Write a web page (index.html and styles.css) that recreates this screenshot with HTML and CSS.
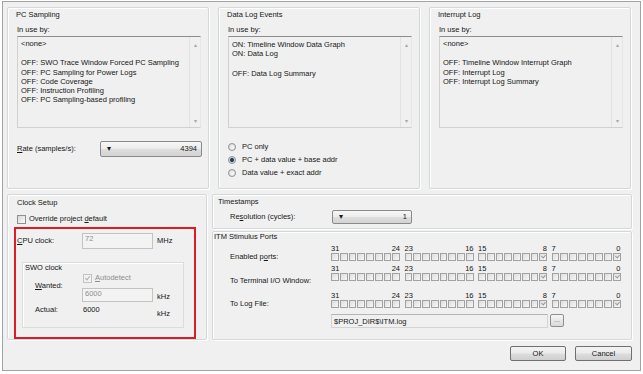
FILE: index.html
```html
<!DOCTYPE html>
<html>
<head>
    <meta charset="utf-8">
    <title>Trace Settings</title>
    <link rel="stylesheet" href="styles.css">
</head>
<body>
    <div class="dialog">
        <div class="top-row">
            <div class="group">
                <div class="group-title">PC Sampling</div>
                <div class="caption">In use by:</div>
                <div class="listbox">
                    <div class="list-items">
                        <div>&lt;none&gt;</div>
                        <div class="blank"></div>
                        <div>OFF: SWO Trace Window Forced PC Sampling</div>
                        <div>OFF: PC Sampling for Power Logs</div>
                        <div>OFF: Code Coverage</div>
                        <div>OFF: Instruction Profiling</div>
                        <div>OFF: PC Sampling-based profiling</div>
                    </div>
                    <div class="scrollbar"><span>&#9652;</span><span>&#9662;</span></div>
                </div>
                <div class="rate-row">
                    <span class="rate-label"><u>R</u>ate (samples/s):</span>
                    <div class="combo rate-combo"><span class="combo-arrow">&#9662;</span><span>4394</span></div>
                </div>
            </div>

            <div class="group">
                <div class="group-title">Data Log Events</div>
                <div class="caption">In use by:</div>
                <div class="listbox">
                    <div class="list-items">
                        <div class="first-on">ON: Timeline Window Data Graph</div>
                        <div>ON: Data Log</div>
                        <div class="blank"></div>
                        <div>OFF: Data Log Summary</div>
                    </div>
                    <div class="scrollbar"><span>&#9652;</span><span>&#9662;</span></div>
                </div>
                <div class="radio-list">
                    <div class="radio-row"><span class="radio"></span><span>PC only</span></div>
                    <div class="radio-row"><span class="radio on"></span><span>PC + data value + base addr</span></div>
                    <div class="radio-row"><span class="radio"></span><span>Data value + exact addr</span></div>
                </div>
            </div>

            <div class="group">
                <div class="group-title">Interrupt Log</div>
                <div class="caption">In use by:</div>
                <div class="listbox">
                    <div class="list-items">
                        <div>&lt;none&gt;</div>
                        <div class="blank"></div>
                        <div>OFF: Timeline Window Interrupt Graph</div>
                        <div>OFF: Interrupt Log</div>
                        <div>OFF: Interrupt Log Summary</div>
                    </div>
                    <div class="scrollbar"><span>&#9652;</span><span>&#9662;</span></div>
                </div>
            </div>
        </div>

        <div class="bottom-row">
            <div class="group clock-group">
                <div class="group-title">Clock Setup</div>
                <div class="override-row"><span class="check"></span><span>Override project <u>d</u>efault</span></div>
                <div class="highlight">
                    <div class="cpu-row">
                        <span class="cpu-label"><u>C</u>PU clock:</span>
                        <div class="field">72</div>
                        <span class="unit">MHz</span>
                    </div>
                    <div class="swo-box">
                        <div class="swo-title">SWO clock</div>
                        <div class="auto-row"><span class="check checked disabled"></span><span class="muted"><u>A</u>utodetect</span></div>
                        <div class="wanted-row">
                            <span class="swo-label"><u>W</u>anted:</span>
                            <div class="field small-field">6000</div>
                            <span class="unit unit-low">kHz</span>
                        </div>
                        <div class="actual-row">
                            <span class="swo-label">Actual:</span>
                            <span class="actual-value">6000</span>
                            <span class="unit unit-drop">kHz</span>
                        </div>
                    </div>
                </div>
            </div>

            <div class="right-col">
                <div class="group stamp-group">
                    <div class="group-title">Timestamps</div>
                    <div class="res-row">
                        <span class="res-label">Re<u>s</u>olution (cycles):</span>
                        <div class="combo res-combo"><span class="combo-arrow">&#9662;</span><span>1</span></div>
                    </div>
                </div>
                <div class="group itm-group">
                    <div class="group-title itm-title">ITM Stimulus Ports</div>
                    <div class="port-row row-1">
                        <span class="port-label">Enabled p<u>o</u>rts:</span>
                        <div class="ports" data-checked="0,8"></div>
                    </div>
                    <div class="port-row row-2">
                        <span class="port-label">To Terminal I/O Window:</span>
                        <div class="ports" data-checked="0,8"></div>
                    </div>
                    <div class="port-row row-3">
                        <span class="port-label">To Log File:</span>
                        <div class="ports" data-checked="0,8"></div>
                    </div>
                    <div class="path-row">
                        <div class="path-field">$PROJ_DIR$\ITM.log</div>
                        <div class="browse">...</div>
                    </div>
                </div>
            </div>
        </div>

        <div class="button-row">
            <div class="button ok-button">OK</div>
            <div class="button cancel-button">Cancel</div>
        </div>
    </div>

    <script>
        // build the 32 stimulus port check boxes, bit 31 on the left
        document.querySelectorAll('.ports').forEach(function (ports) {
            const checked = ports.dataset.checked.split(',').map(Number);
            for (let g = 3; g >= 0; g--) {
                const hi = g * 8 + 7;
                const lo = g * 8;
                const group = document.createElement('div');
                group.className = 'port-group';
                group.innerHTML = '<div class="port-nums"><span>' + hi + '</span><span>' + lo + '</span></div>';
                const cells = document.createElement('div');
                cells.className = 'port-cells';
                for (let bit = hi; bit >= lo; bit--) {
                    const cell = document.createElement('span');
                    cell.className = checked.includes(bit) ? 'port-cell checked' : 'port-cell';
                    cells.appendChild(cell);
                }
                group.appendChild(cells);
                ports.appendChild(group);
            }
        });
    </script>
</body>
</html>
```

FILE: styles.css
```css
* {
    box-sizing: border-box;
}

body {
    margin: 0;
    padding: 1px 0 0 2px;
    background: #ffffff;
    font-family: "Liberation Sans", Arial, sans-serif;
    font-size: 7.5px;
    line-height: 10px;
    color: #161616;
}

u {
    text-decoration-thickness: 1px;
    text-underline-offset: 1px;
}

.dialog {
    width: 639px;
    height: 370px;
    border: 1px solid #a3a3a3;
    background: #f0f0f0;
    padding: 5px 8px 0 4px;
    display: flex;
    flex-direction: column;
}

.top-row {
    display: flex;
    gap: 9px;
}

.group {
    border: 1px solid #d3d8db;
    border-radius: 2px;
    box-shadow: inset 1px 1px 0 #ffffff, 1px 1px 0 #ffffff;
    padding: 2px 0 0 8px;
}

.top-row .group {
    width: 202px;
    height: 182px;
}

.group-title {
    line-height: 10px;
}

.caption {
    margin: 5px 0 0 1px;
}

.listbox {
    display: flex;
    width: 184px;
    height: 92px;
    margin: 1px 0 0 1px;
    border: 1px solid #d0d0d0;
    border-top-color: #8d8d8d;
    border-right-color: #e6e6e6;
}

.list-items {
    flex: 1;
    padding: 2px 0 0 3px;
    line-height: 9.3px;
    white-space: nowrap;
}

.blank {
    height: 10px;
}

.first-on {
    margin-top: 1px;
}

.scrollbar {
    width: 11px;
    border-left: 1px solid #e2e2e2;
    display: flex;
    flex-direction: column;
    justify-content: space-between;
    align-items: center;
    padding: 3px 0 1px;
    color: #a6a6a6;
    font-size: 6px;
}

.rate-row {
    display: flex;
    align-items: center;
    margin-top: 13px;
}

.rate-label {
    width: 84px;
    padding-left: 1px;
}

.combo {
    display: flex;
    justify-content: space-between;
    align-items: center;
    border: 1px solid #8a8a8a;
    border-radius: 2px;
    background: linear-gradient(#f7f7f7, #ececec 48%, #dedede 52%, #d3d3d3);
    padding: 0 4px 0 6px;
}

.combo-arrow {
    font-size: 8px;
    color: #1a1a1a;
}

.rate-combo {
    width: 102px;
    height: 16px;
}

.radio-list {
    margin-top: 12px;
    padding-left: 1px;
}

.radio-row {
    display: flex;
    align-items: center;
    gap: 6px;
    height: 13px;
}

.radio {
    width: 8px;
    height: 8px;
    border-radius: 50%;
    border: 1px solid #8f9193;
    background: radial-gradient(circle at 60% 60%, #f8f8f8, #d9d9d9);
}

.radio.on {
    background: radial-gradient(circle, #1f3348 0, #2c4660 1.6px, #c9d3dc 2.4px, #eeeeee);
}

.bottom-row {
    display: flex;
    gap: 5px;
    margin-top: 5px;
    height: 146px;
}

.clock-group {
    width: 200px;
    padding: 3px 0 0 9px;
}

.override-row {
    display: flex;
    align-items: center;
    gap: 3px;
    margin-top: 6px;
}

.check {
    position: relative;
    width: 9px;
    height: 9px;
    border: 1px solid #8e8f8f;
    background: linear-gradient(135deg, #d8d8d8, #fbfbfb);
}

.check.checked::after,
.port-cell.checked::after {
    content: "";
    position: absolute;
    left: 2px;
    top: 0;
    width: 2px;
    height: 4px;
    border: solid #3a3a3a;
    border-width: 0 1px 1px 0;
    transform: rotate(40deg);
}

.check.disabled {
    border-color: #c2c2c2;
    background: #f2f2f2;
}

.check.disabled::after {
    border-color: #b0b0b0;
}

.muted {
    color: #8e8e8e;
}

.highlight {
    width: 182px;
    height: 112px;
    margin: 3px 0 0 -3px;
    border: 2px solid #dc1c24;
}

.cpu-row {
    display: flex;
    align-items: center;
    margin-top: 4px;
    padding-left: 1px;
}

.cpu-label {
    width: 65px;
}

.field {
    width: 71px;
    height: 16px;
    border: 1px solid #c3c3c3;
    background: #f3f3f3;
    color: #8f8f8f;
    padding: 0 2px;
}

.small-field {
    height: 14px;
}

.unit {
    margin-left: 4px;
}

.swo-box {
    width: 162px;
    height: 66px;
    margin: 13px 0 0 6px;
    border: 1px solid #d9dde0;
    box-shadow: inset 1px 1px 0 #ffffff;
    padding-left: 2px;
}

.auto-row {
    display: flex;
    align-items: center;
    gap: 3px;
    margin-left: 58px;
}

.wanted-row {
    display: flex;
    align-items: flex-start;
    padding-left: 10px;
}

.swo-label {
    width: 47px;
}

.wanted-row .swo-label {
    margin-top: -2px;
}

.wanted-row .field {
    margin-top: 5px;
}

.unit-low {
    align-self: flex-end;
}

.actual-row {
    display: flex;
    align-items: flex-start;
    margin-top: 3px;
    padding-left: 10px;
}

.actual-value {
    width: 75px;
    padding-left: 1px;
}

.unit-drop {
    margin: 4px 0 0 0;
}

.right-col {
    width: 420px;
    display: flex;
    flex-direction: column;
    gap: 2px;
}

.stamp-group {
    height: 35px;
    padding: 2px 0 0 5px;
}

.res-row {
    display: flex;
    align-items: center;
    margin: 3px 0 0 12px;
}

.res-label {
    width: 102px;
}

.res-combo {
    width: 80px;
    height: 14px;
}

.itm-group {
    flex: 1;
    padding: 0 0 0 17px;
}

.itm-title {
    margin-left: -16px;
}

.port-row {
    display: flex;
    align-items: flex-end;
}

.row-1 {
    margin-top: 3px;
}

.row-2 {
    margin-top: 4px;
}

.row-3 {
    margin-top: 11px;
}

.port-label {
    width: 101px;
    line-height: 9px;
}

.row-2 .port-label {
    position: relative;
    top: 4px;
}

.ports {
    display: flex;
    gap: 4.5px;
}

.port-group {
    width: 69px;
}

.port-nums {
    display: flex;
    justify-content: space-between;
    line-height: 8px;
}

.port-cells {
    display: flex;
    gap: 1px;
    height: 8px;
}

.port-cell {
    position: relative;
    flex: 1;
    border: 1px solid #a2a2a2;
    background: linear-gradient(135deg, #dedede, #f6f6f6);
}

.port-cell.checked::after {
    left: 2px;
    top: 0;
    height: 3px;
    border-color: #9a9a9a;
}

.path-row {
    display: flex;
    gap: 2px;
    margin: 6px 0 0 101px;
}

.path-field {
    width: 217px;
    height: 14px;
    border: 1px solid #d4d4d4;
    border-top-color: #b5b5b5;
    padding: 1px 2px;
    line-height: 11px;
}

.browse {
    width: 14px;
    height: 13px;
    border: 1px solid #8e8e8e;
    border-radius: 2px;
    background: linear-gradient(#f6f6f6, #dadada);
    text-align: center;
    line-height: 9px;
    font-size: 7px;
    color: #707070;
}

.button-row {
    display: flex;
    justify-content: flex-end;
    gap: 9px;
    margin-top: 6px;
}

.button {
    width: 56px;
    height: 15px;
    border: 1px solid #707070;
    border-radius: 2px;
    background: linear-gradient(#f3f3f3, #ebebeb 48%, #dddddd 52%, #cfcfcf);
    text-align: center;
    line-height: 13px;
}

.cancel-button {
    width: 57px;
}
```
